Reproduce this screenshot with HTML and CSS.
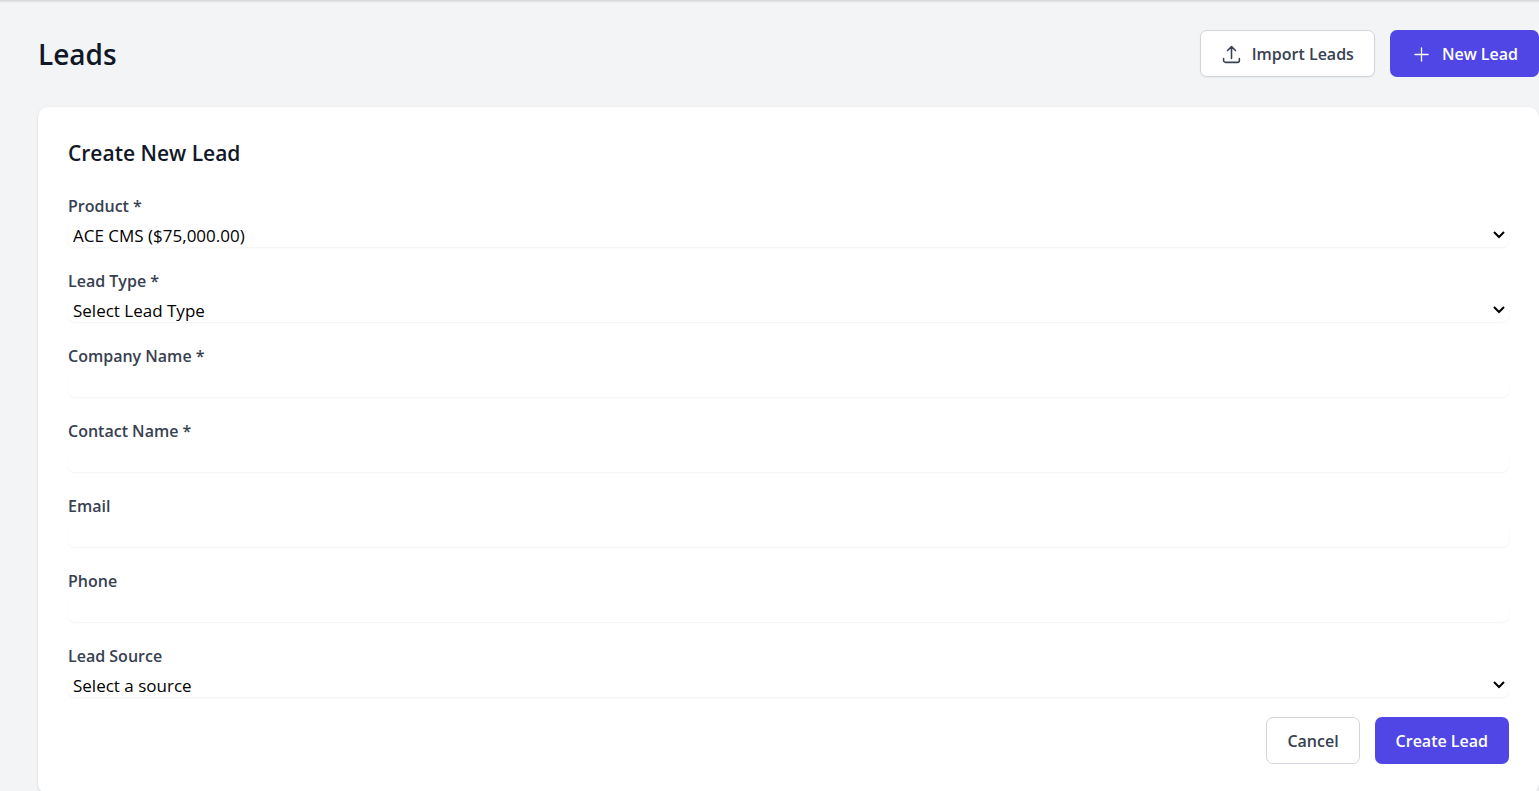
FILE: index.html
```html
<!DOCTYPE html>
<html lang="en">
<head>
    <meta charset="UTF-8">
    <meta name="viewport" content="width=device-width, initial-scale=1.0">
    <title>Leads</title>
    <link rel="stylesheet" href="styles.css">
</head>
<body>

    <header class="topbar"></header>

    <main class="page">
        <div class="page-header">
            <h1>Leads</h1>
            <div class="actions">
                <button type="button" class="btn btn-outline raised">
                    <svg class="icon" viewBox="0 0 24 24" fill="none" stroke="currentColor" stroke-width="1.800" stroke-linecap="round" stroke-linejoin="round" aria-hidden="true">
                        <path d="M3 16.500v2.250A2.250 2.250 0 0 0 5.250 21h13.500A2.250 2.250 0 0 0 21 18.750V16.500M7.500 7.500L12 3l4.500 4.500M12 3v13.500"/>
                    </svg>
                    Import Leads
                </button>
                <button type="button" class="btn btn-primary">
                    <svg class="icon" viewBox="0 0 24 24" fill="none" stroke="currentColor" stroke-width="1.500" stroke-linecap="round" aria-hidden="true">
                        <path d="M12 4.500v15M4.500 12h15"/>
                    </svg>
                    New Lead
                </button>
            </div>
        </div>

        <!-- New Lead Form -->
        <section class="card">
            <h2>Create New Lead</h2>
            <form class="lead-form">
                <div class="field">
                    <label for="product">Product *</label>
                    <select id="product">
                        <option>ACE CMS ($75,000.00)</option>
                    </select>
                </div>
                <div class="field">
                    <label for="lead-type">Lead Type *</label>
                    <select id="lead-type">
                        <option value="">Select Lead Type</option>
                    </select>
                </div>
                <div class="field">
                    <label for="company">Company Name *</label>
                    <input type="text" id="company" required>
                </div>
                <div class="field">
                    <label for="contact">Contact Name *</label>
                    <input type="text" id="contact" required>
                </div>
                <div class="field">
                    <label for="email">Email</label>
                    <input type="email" id="email">
                </div>
                <div class="field">
                    <label for="phone">Phone</label>
                    <input type="tel" id="phone">
                </div>
                <div class="field">
                    <label for="source">Lead Source</label>
                    <select id="source">
                        <option value="">Select a source</option>
                    </select>
                </div>
                <div class="actions form-actions">
                    <button type="button" class="btn btn-outline">Cancel</button>
                    <button type="submit" class="btn btn-primary">Create Lead</button>
                </div>
            </form>
        </section>
    </main>

</body>
</html>
```
FILE: styles.css
```css
/* General Reset */
* {
    margin: 0;
    padding: 0;
    box-sizing: border-box;
}

body {
    font-family: "Segoe UI", "Open Sans", "Noto Sans", sans-serif;
    font-size: 16px;
    line-height: 25px;
    background-color: #f3f4f6;
    color: #111827;
}

/* Bottom shadow of the navigation bar */
.topbar {
    height: 3px;
    background: linear-gradient(#d3d4d6, #f3f4f6);
}

.page {
    padding: 27px 0 30px 38px;
}

.page-header {
    display: flex;
    align-items: center;
    justify-content: space-between;
    margin-bottom: 30px;
}

h1 {
    font-size: 28px;
    font-weight: 600;
    line-height: 40px;
}

h2 {
    font-size: 21px;
    font-weight: 600;
    line-height: 32px;
    margin-bottom: 24px;
}

/* Buttons */
.actions {
    display: flex;
    gap: 15px;
}

.btn {
    display: flex;
    align-items: center;
    gap: 10px;
    padding: 11px 20px 9px;
    border: 1px solid transparent;
    border-radius: 7px;
    font-family: inherit;
    font-size: 16px;
    font-weight: 600;
    line-height: 25px;
    cursor: pointer;
}

.btn-outline {
    background-color: #fff;
    border-color: #d1d5db;
    color: #374151;
}

.btn-primary {
    background-color: #4f46e5;
    color: #fff;
}

.raised {
    box-shadow: 0 1px 2px rgba(0, 0, 0, 0.05);
}

.icon {
    width: 21px;
    height: 21px;
}

/* Card */
.card {
    background-color: #fff;
    padding: 30px;
    border-radius: 10px;
    box-shadow: 0 1px 3px rgba(0, 0, 0, 0.1), 0 1px 2px rgba(0, 0, 0, 0.06);
}

/* Form */
.field {
    display: flex;
    flex-direction: column;
    gap: 4px;
    margin-bottom: 21px;
}

.field:nth-last-child(2) {
    margin-bottom: 20px;
}

.field label {
    line-height: 26px;
    font-weight: 600;
    color: #374151;
}

.field input,
.field select {
    width: 100%;
    height: 24px;
    padding: 0 5px;
    border: none;
    border-radius: 7px;
    background-color: #fff;
    box-shadow: 0 1px 2px rgba(0, 0, 0, 0.05);
    font-family: inherit;
    font-size: 17px;
    color: #000;
}

.field select {
    appearance: none;
    background-image: url("data:image/svg+xml,%3Csvg xmlns='http://www.w3.org/2000/svg' width='12' height='8' fill='none' stroke='black' stroke-width='2'%3E%3Cpath d='M1 1l5 5 5-5'/%3E%3C/svg%3E");
    background-repeat: no-repeat;
    background-position: right 4px center;
}

.form-actions {
    justify-content: flex-end;
}
```
